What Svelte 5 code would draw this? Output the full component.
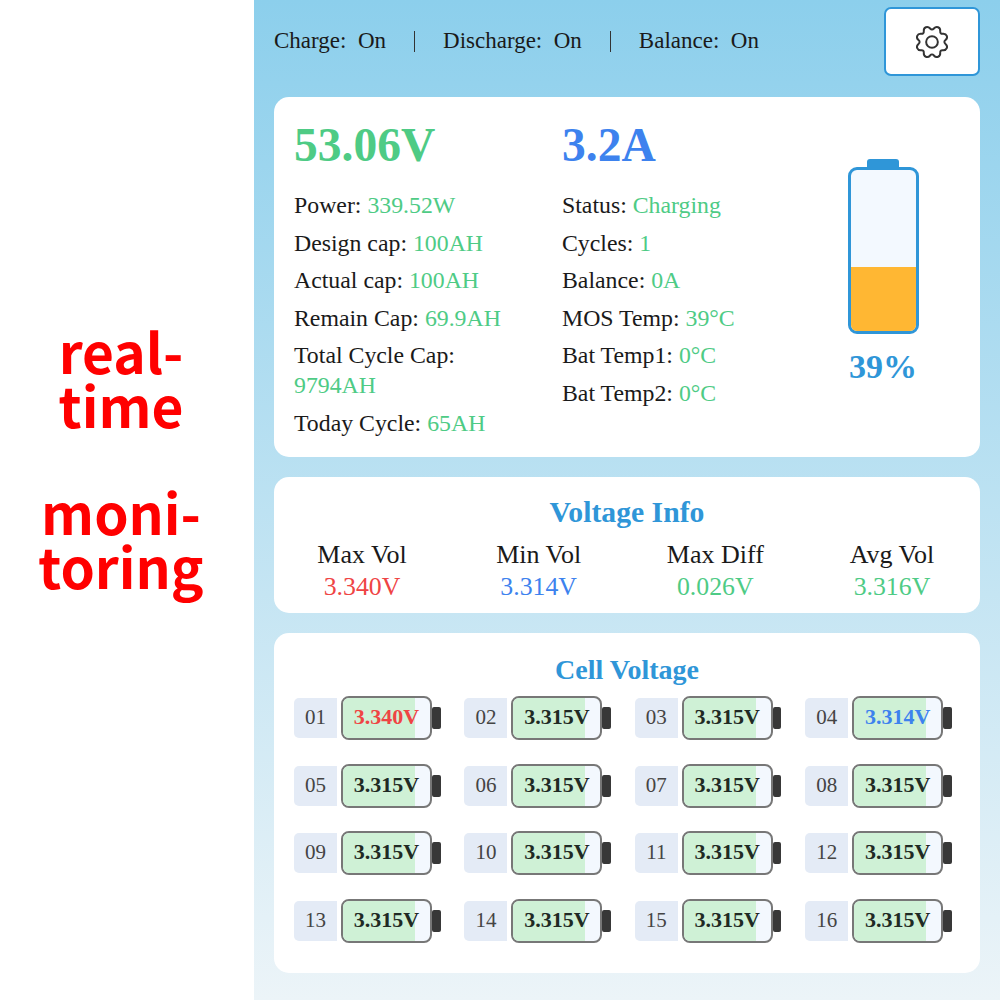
<script lang="ts">
  const left = [
    ['Power', '339.52W'],
    ['Design cap', '100AH'],
    ['Actual cap', '100AH'],
    ['Remain Cap', '69.9AH'],
    ['Total Cycle Cap', '9794AH'],
    ['Today Cycle', '65AH']
  ];
  const right = [
    ['Status', 'Charging'],
    ['Cycles', '1'],
    ['Balance', '0A'],
    ['MOS Temp', '39°C'],
    ['Bat Temp1', '0°C'],
    ['Bat Temp2', '0°C']
  ];
  const stats = [
    { label: 'Max Vol', value: '3.340V', tone: 'red' },
    { label: 'Min Vol', value: '3.314V', tone: 'blue' },
    { label: 'Max Diff', value: '0.026V', tone: 'green' },
    { label: 'Avg Vol', value: '3.316V', tone: 'green' }
  ];
  const cells = Array.from({ length: 16 }, (_, i) => ({
    id: String(i + 1).padStart(2, '0'),
    value: i === 0 ? '3.340V' : i === 3 ? '3.314V' : '3.315V',
    tone: i === 0 ? 'red' : i === 3 ? 'blue' : ''
  }));

  // eight flat-topped teeth, valleys on the axes
  const polar = (deg: number, r: number) => {
    const a = (deg * Math.PI) / 180;
    return [r * Math.sin(a), -r * Math.cos(a)];
  };
  const pts = Array.from({ length: 8 }, (_, i) => {
    const c = 22.5 + i * 45;
    return [polar(c - 22.5, 12.5), polar(c - 9, 18), polar(c + 9, 18)];
  }).flat();
  const mid = (a: number[], b: number[]) => [(a[0] + b[0]) / 2, (a[1] + b[1]) / 2];
  const fmt = (p: number[]) => `${p[0].toFixed(2)} ${p[1].toFixed(2)}`;
  const gear =
    `M${fmt(mid(pts[pts.length - 1], pts[0]))}` +
    pts.map((p, i) => `Q${fmt(p)} ${fmt(mid(p, pts[(i + 1) % pts.length]))}`).join('') +
    'Z';
</script>

<div class="page">
  <aside class="side">
    <p>real-<br />time</p>
    <p>moni-<br />toring</p>
  </aside>

  <main class="panel">
    <header class="top">
      <div class="flags">
        <span>Charge:&nbsp; On</span>
        <i></i>
        <span>Discharge:&nbsp; On</span>
        <i></i>
        <span>Balance:&nbsp; On</span>
      </div>
      <button class="gear" aria-label="Settings">
        <svg width="36" height="36" viewBox="-20 -20 40 40" fill="none" stroke="#333" stroke-width="2.200" stroke-linejoin="round">
          <path d={gear} />
          <circle r="6.500" />
        </svg>
      </button>
    </header>

    <section class="card summary">
      <div class="col col-a">
        <div class="big green">53.06V</div>
        {#each left as [k, v]}
          <div class="row">{k}: <span class="green">{v}</span></div>
        {/each}
      </div>
      <div class="col col-b">
        <div class="big blue">3.2A</div>
        {#each right as [k, v]}
          <div class="row">{k}: <span class="green">{v}</span></div>
        {/each}
      </div>
      <div class="pack">
        <div class="cap"></div>
        <div class="shell"><div class="level"></div></div>
        <div class="pct">39%</div>
      </div>
    </section>

    <section class="card info">
      <h2>Voltage Info</h2>
      <div class="stats">
        {#each stats as s}
          <div class="stat">
            <div>{s.label}</div>
            <div class="val {s.tone}">{s.value}</div>
          </div>
        {/each}
      </div>
    </section>

    <section class="card voltages">
      <h3>Cell Voltage</h3>
      <div class="grid">
        {#each cells as c}
          <div class="cell">
            <span class="num">{c.id}</span>
            <div class="bat">
              <div class="fill"></div>
              <b class={c.tone}>{c.value}</b>
            </div>
            <span class="tip"></span>
          </div>
        {/each}
      </div>
    </section>
  </main>
</div>

<style>
  :global(body) {
    margin: 0;
    background: #fff;
  }

  .page {
    display: flex;
    width: 1000px;
    height: 1000px;
    overflow: hidden;
    font-family: 'Liberation Serif', 'Times New Roman', serif;
    color: #1a1a1a;
  }

  .side {
    width: 254px;
    flex: none;
    display: flex;
    flex-direction: column;
    align-items: center;
    gap: 53px;
    padding-top: 323px;
    box-sizing: border-box;
    font-family: 'Noto Sans CJK SC', 'Noto Sans', sans-serif;
    font-weight: 700;
    font-size: 55px;
    line-height: 54px;
    color: #f00;
    text-align: center;
  }

  .side p {
    margin: 0 12px 0 0;
    width: 240px;
  }

  .panel {
    flex: 1;
    padding: 0 20px;
    background: linear-gradient(180deg, #8ccfec 0%, #ecf4f8 100%);
  }

  .top {
    height: 97px;
    display: flex;
    align-items: flex-start;
    justify-content: space-between;
  }

  .flags {
    display: flex;
    align-items: center;
    height: 24px;
    margin-top: 29px;
    font-size: 23px;
    color: #1a1a1a;
  }

  .flags i {
    width: 1px;
    height: 21px;
    background: #333;
    margin: 0 28px;
  }

  .gear {
    width: 96px;
    height: 69px;
    margin: 7px 0 0;
    padding: 0;
    box-sizing: border-box;
    background: #fff;
    border: 2px solid #2f96d8;
    border-radius: 7px;
    display: flex;
    align-items: center;
    justify-content: center;
  }

  .card {
    background: #fff;
    border-radius: 15px;
    margin-bottom: 20px;
  }

  .green { color: #4ecb85; }
  .blue { color: #3d82ee; }
  .red { color: #ef4444; }

  .summary {
    height: 360px;
    display: flex;
    padding: 20px 20px 0;
    box-sizing: border-box;
  }

  .col-a { width: 268px; flex: none; }
  .col-b { width: 270px; flex: none; }

  .big {
    font-size: 47.500px;
    font-weight: 700;
    line-height: 56px;
    margin-bottom: 17px;
  }

  .row {
    font-size: 23.800px;
    line-height: 30px;
    margin-bottom: 7.600px;
    width: 215px;
  }

  .pack {
    width: 72px;
    margin-left: 15px;
    margin-top: 42px;
    display: flex;
    flex-direction: column;
    align-items: center;
  }

  .cap {
    width: 32px;
    height: 8px;
    background: #2f96d8;
    border-radius: 3px 3px 0 0;
  }

  .shell {
    width: 71px;
    height: 167px;
    box-sizing: border-box;
    border: 3.500px solid #2f96d8;
    border-radius: 9px;
    background: #f3f9ff;
    overflow: hidden;
    display: flex;
    align-items: flex-end;
  }

  .level {
    width: 100%;
    height: 39.500%;
    background: #ffb733;
  }

  .pct {
    font-size: 34px;
    font-weight: 700;
    color: #2f96d8;
    line-height: 40px;
    margin-top: 13px;
  }

  .info {
    height: 136px;
    text-align: center;
    padding-top: 17px;
    box-sizing: border-box;
  }

  .info h2 {
    margin: 0;
    font-size: 29.700px;
    line-height: 36px;
    font-weight: 700;
    color: #2f96d8;
  }

  .stats {
    display: flex;
    justify-content: space-between;
    font-size: 26px;
    line-height: 32px;
    margin-top: 9px;
  }

  .stat {
    width: 176px;
    color: #1a1a1a;
  }

  .val {
    font-size: 25.800px;
  }

  .voltages {
    height: 340px;
    padding: 20px 20px 0;
    box-sizing: border-box;
  }

  .voltages h3 {
    margin: 0 0 9px;
    text-align: center;
    font-size: 28px;
    line-height: 34px;
    font-weight: 700;
    color: #2f96d8;
  }

  .grid {
    display: grid;
    grid-template-columns: repeat(4, 147px);
    column-gap: 23.400px;
    row-gap: 23.500px;
  }

  .cell {
    display: flex;
    align-items: center;
    height: 44px;
  }

  .num {
    width: 43px;
    height: 40px;
    flex: none;
    margin-right: 4px;
    background: #e4ebf6;
    border-radius: 5px 0 0 5px;
    text-align: center;
    line-height: 38px;
    font-size: 21px;
    color: #444;
  }

  .bat {
    position: relative;
    width: 91px;
    height: 44px;
    flex: none;
    box-sizing: border-box;
    border: 2.500px solid #777;
    border-radius: 8px;
    background: #f3f8fe;
    overflow: hidden;
    text-align: center;
    line-height: 38px;
  }

  .fill {
    position: absolute;
    inset: 0 15px 0 0;
    background: #cff1d6;
  }

  .bat b {
    position: relative;
    font-size: 22px;
    color: #1f2a24;
  }

  .bat b.red { color: #ef4444; }
  .bat b.blue { color: #3d82ee; }

  .tip {
    width: 8.500px;
    height: 22px;
    flex: none;
    background: #383838;
    border-radius: 2px;
  }
</style>
